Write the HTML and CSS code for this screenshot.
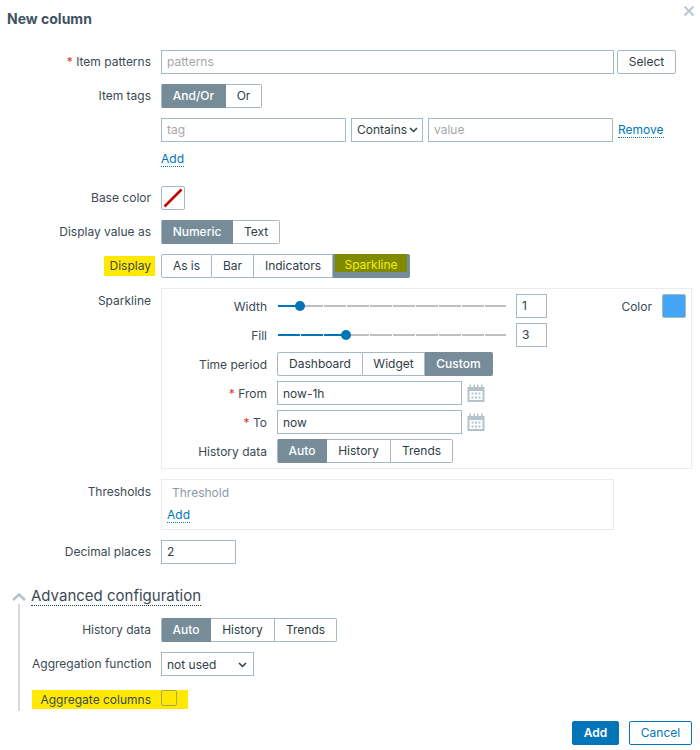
FILE: index.html
```html
<!DOCTYPE html>
<html lang="en">
<head>
  <meta charset="UTF-8" />
  <title>New column</title>
  <link rel="stylesheet" href="styles.css">
</head>
<body>
  <div class="dialog">
    <div class="dialog-head">
      <h1>New column</h1>
      <svg class="close" width="10" height="10" viewBox="0 0 10 10"><path d="M0.5 0.5L9.5 9.5M9.5 0.5L0.5 9.5" /></svg>
    </div>

    <div class="row">
      <div class="label"><span class="req">*</span> Item patterns</div>
      <div class="field">
        <input class="input w-patterns" type="text" placeholder="patterns" />
        <button class="btn-alt">Select</button>
      </div>
    </div>

    <div class="row">
      <div class="label">Item tags</div>
      <div class="seg">
        <span class="on s-andor">And/Or</span><span class="s-or">Or</span>
      </div>
    </div>

    <div class="row">
      <div class="label"></div>
      <div class="field">
        <input class="input w-tag" type="text" placeholder="tag" />
        <div class="select w-contains">Contains
          <svg width="9" height="6" viewBox="0 0 9 6"><path d="M1 1L4.5 4.5L8 1" /></svg>
        </div>
        <input class="input w-tag" type="text" placeholder="value" />
        <a class="link remove" href="#">Remove</a>
      </div>
    </div>

    <div class="row row-link">
      <div class="label"></div>
      <a class="link" href="#">Add</a>
    </div>

    <div class="row">
      <div class="label">Base color</div>
      <div class="swatch swatch-none">
        <svg width="22" height="22" viewBox="0 0 22 22"><path d="M2.500 19.500L19.500 2.500" /></svg>
      </div>
    </div>

    <div class="row">
      <div class="label">Display value as</div>
      <div class="seg">
        <span class="on s-numeric">Numeric</span><span class="s-text">Text</span>
      </div>
    </div>

    <div class="row">
      <div class="label"><mark class="hl-label">Display</mark></div>
      <div class="seg">
        <span class="s-is">As is</span><span class="s-bar">Bar</span><span class="s-ind">Indicators</span><span class="on s-spark"><mark class="hl-btn">Sparkline</mark></span>
      </div>
    </div>

    <div class="row">
      <div class="label label-box">Sparkline</div>
      <div class="box box-spark">
        <div class="spark-top">
          <div class="spark-sliders">
            <div class="subrow">
              <div class="sublabel">Width</div>
              <div class="slider"><div class="slider-fill" style="width: 22px"></div></div>
              <input class="input w-num" type="text" value="1" />
            </div>
            <div class="subrow">
              <div class="sublabel">Fill</div>
              <div class="slider"><div class="slider-fill" style="width: 68px"></div></div>
              <input class="input w-num" type="text" value="3" />
            </div>
          </div>
          <div class="spark-color">
            <span>Color</span>
            <div class="swatch swatch-blue"></div>
          </div>
        </div>
        <div class="subrow">
          <div class="sublabel">Time period</div>
          <div class="seg">
            <span class="s-dash">Dashboard</span><span class="s-widget">Widget</span><span class="on s-custom">Custom</span>
          </div>
        </div>
        <div class="subrow">
          <div class="sublabel"><span class="req">*</span> From</div>
          <input class="input w-date" type="text" value="now-1h" />
          <svg class="cal" width="18" height="18" viewBox="0 0 18 18"><use href="#cal-icon" /></svg>
        </div>
        <div class="subrow">
          <div class="sublabel"><span class="req">*</span> To</div>
          <input class="input w-date" type="text" value="now" />
          <svg class="cal" width="18" height="18" viewBox="0 0 18 18"><use href="#cal-icon" /></svg>
        </div>
        <div class="subrow">
          <div class="sublabel">History data</div>
          <div class="seg">
            <span class="on s-auto">Auto</span><span class="s-hist">History</span><span class="s-trends">Trends</span>
          </div>
        </div>
      </div>
    </div>

    <div class="row">
      <div class="label label-box">Thresholds</div>
      <div class="box box-thresh">
        <div class="thresh-head">Threshold</div>
        <a class="link" href="#">Add</a>
      </div>
    </div>

    <div class="row">
      <div class="label">Decimal places</div>
      <input class="input w-decimal" type="text" value="2" />
    </div>

    <div class="adv-head">
      <svg width="14" height="8" viewBox="0 0 14 8"><path d="M1 7L7 1.500L13 7" /></svg>
      <span>Advanced configuration</span>
    </div>

    <div class="adv">
      <div class="row">
        <div class="label">History data</div>
        <div class="seg">
          <span class="on s-auto">Auto</span><span class="s-hist">History</span><span class="s-trends">Trends</span>
        </div>
      </div>
      <div class="row">
        <div class="label">Aggregation function</div>
        <div class="select w-agg">not used
          <svg width="9" height="6" viewBox="0 0 9 6"><path d="M1 1L4.500 4.500L8 1" /></svg>
        </div>
      </div>
      <div class="row row-agg">
        <div class="label">Aggregate columns</div>
        <div class="check"></div>
      </div>
    </div>

    <div class="dialog-foot">
      <button class="btn-main">Add</button>
      <button class="btn-cancel">Cancel</button>
    </div>
  </div>

  <svg width="0" height="0" class="defs">
    <defs>
      <g id="cal-icon">
        <path class="cal-body" d="M0.500 3h2V0.500h1.500V3h2.500V0.500h1.500V3h2V0.500h1.500V3h2.500V0.500h1.500V3h2V18H0.500zM2.500 7v9h13V7z" />
        <path class="cal-dots" d="M4.500 8.500h2V10.500h-2zM8 8.500h2V10.500H8zM11.500 8.500h2V10.500h-2zM4.500 12.500h2V14.500h-2zM8 12.500h2V14.500H8zM11.500 12.500h2V14.500h-2z" />
      </g>
    </defs>
  </svg>
</body>
</html>
```

FILE: styles.css
```css
* {
  box-sizing: border-box;
}
body {
  margin: 0;
  background: #fff;
  color: #3b4a54;
  font-family: Inter, "Liberation Sans", sans-serif;
  font-size: 12px;
}
.dialog {
  width: 700px;
  height: 750px;
}
.dialog-head {
  display: flex;
  justify-content: space-between;
  height: 50px;
  padding: 6px 6px 0 7px;
}
.dialog-head h1 {
  margin: 5px 0 0;
  font-size: 14px;
  line-height: 16px;
  font-weight: 700;
  color: #3f5362;
}
.close {
  fill: none;
  stroke: #bcc8cf;
  stroke-width: 2;
}

/* rows */
.row {
  display: flex;
  align-items: flex-start;
  margin-bottom: 10px;
}
.label {
  width: 151px;
  margin-right: 10px;
  flex: none;
  text-align: right;
  white-space: nowrap;
  line-height: 24px;
  height: 24px;
}
.label-box {
  line-height: 25px;
}
.req {
  color: #e33734;
}
.field {
  display: flex;
  align-items: center;
}
.row-link {
  height: 24px;
}

/* inputs */
.input {
  height: 24px;
  padding: 0 5px 1px;
  border: 1px solid #a9b9c2;
  border-radius: 0;
  background: #fff;
  color: #2f3d46;
  font-family: inherit;
  font-size: 12px;
  outline: none;
}
.input::placeholder {
  color: #a6a6a6;
}
.w-patterns { width: 453px; }
.w-tag { width: 185px; }
.w-num { width: 31px; margin-left: 10px; }
.w-date { width: 185px; padding-bottom: 0; }
.w-decimal { width: 75px; }
.select {
  display: flex;
  align-items: center;
  justify-content: space-between;
  height: 24px;
  padding: 0 5px 1px;
  border: 1px solid #a9b9c2;
  color: #2f3d46;
}
.select svg {
  fill: none;
  stroke: #2f3d46;
  stroke-width: 1.5;
}
.w-contains { width: 72px; margin: 0 5px; padding-right: 4px; white-space: nowrap; }
.w-agg { width: 93px; padding: 1px 6px 0 5px; }
.btn-alt {
  width: 59px;
  height: 24px;
  margin-left: 3px;
  padding: 0 0 1px;
  border: 1px solid #a9b9c2;
  border-radius: 2px;
  background: #fff;
  color: #2f3d46;
  font-family: inherit;
  font-size: 12px;
}
.link {
  color: #0275b8;
  text-decoration: none;
  border-bottom: 1px dotted #0275b8;
  line-height: 14px;
}
.remove {
  margin-left: 5px;
}

/* segmented control */
.seg {
  display: flex;
  height: 24px;
  border-radius: 2px;
}
.seg span {
  display: block;
  height: 24px;
  line-height: 22px;
  text-align: center;
  color: #2f3d46;
  border: 1px solid #a9b9c2;
  border-left: 0;
}
.seg span:first-child {
  border-left: 1px solid #a9b9c2;
  border-radius: 2px 0 0 2px;
}
.seg span:last-child {
  border-radius: 0 2px 2px 0;
}
.seg .on {
  background: #768d99;
  border-color: #768d99;
  color: #fff;
  font-weight: 500;
}
.s-andor { width: 65px; }
.s-or { width: 36px; }
.s-numeric { width: 72px; }
.s-text { width: 47px; }
.s-is { width: 51px; }
.s-bar { width: 42px; }
.s-ind { width: 79px; }
.s-spark { width: 77px; }
.s-dash { width: 86px; }
.s-widget { width: 62px; }
.s-custom { width: 68px; }
.s-auto { width: 50px; }
.s-hist { width: 64px; }
.s-trends { width: 62px; }

/* highlighter marks */
.hl-label {
  display: inline-block;
  padding: 0 4px 0 6px;
  margin-right: -4px;
  line-height: 20px;
  background: #ffe900;
  color: #3b4a54;
}
.hl-btn {
  display: block;
  height: 18px;
  margin: -1px 2px 0 2px;
  line-height: 22px;
  background: #808a00;
  color: #f4f000;
  font-weight: 400;
}

/* swatches */
.swatch {
  width: 24px;
  height: 24px;
  border: 1px solid #a9b9c2;
  border-radius: 2px;
}
.swatch-none svg {
  display: block;
  fill: none;
  stroke: #c00000;
  stroke-width: 2.5;
}
.swatch-blue {
  background: #42a5f5;
}

/* framed groups */
.box {
  border: 1px solid #ebebeb;
}
.box-spark {
  width: 531px;
  height: 181px;
  padding: 5px 5px 5px 0;
}
.box-thresh {
  width: 453px;
  height: 51px;
  padding: 5px;
}
.thresh-head {
  padding-left: 5px;
  line-height: 16px;
  margin-bottom: 6px;
  color: #8a9aa5;
}
.spark-top {
  display: flex;
  justify-content: space-between;
  align-items: flex-start;
  margin-bottom: 5px;
}
.spark-color {
  display: flex;
  align-items: center;
  gap: 10px;
}
.subrow {
  display: flex;
  align-items: center;
  height: 24px;
  margin-bottom: 5px;
}
.subrow:last-child {
  margin-bottom: 0;
}
.sublabel {
  width: 105px;
  margin-right: 10px;
  text-align: right;
}
.cal {
  margin-left: 5px;
}
.cal-body {
  fill: #b4c3cb;
}
.cal-dots {
  fill: #b4c3cb;
}
.defs {
  position: absolute;
}

/* slider */
.slider {
  position: relative;
  width: 228px;
  height: 2px;
  margin-left: 1px;
  background: repeating-linear-gradient(90deg, #bfbfbf 0, #bfbfbf 22px, #fff 22px, #fff 23px);
}
.slider-fill {
  position: relative;
  height: 2px;
  background: repeating-linear-gradient(90deg, #0275b8 0, #0275b8 22px, #fff 22px, #fff 23px);
}
.slider-fill::after {
  content: "";
  position: absolute;
  right: -5px;
  top: -4px;
  width: 10px;
  height: 10px;
  border-radius: 50%;
  background: #0275b8;
}

/* advanced section */
.adv-head {
  display: flex;
  align-items: center;
  gap: 5px;
  height: 21px;
  margin: 22px 0 0 12px;
  font-size: 15px;
}
.adv-head span {
  border-bottom: 1px dotted #2f3d46;
  line-height: 18px;
}
.adv-head svg {
  fill: none;
  stroke: #b4c3cb;
  stroke-width: 2.5;
}
.adv {
  height: 107px;
  margin: -3px 0 0 18px;
  padding: 14px 0 0 12px;
  border-left: 2px solid #d5dde2;
}
.adv .label {
  width: 119px;
}
.adv .row:last-child {
  margin-bottom: 0;
}
.row-agg {
  width: 156px;
  height: 19px;
  margin-top: 14px;
  background: #ffe900;
}
.row-agg .label {
  height: 19px;
  line-height: 19px;
}
.check {
  width: 16px;
  height: 16px;
  border: 1px solid #a9a944;
  border-radius: 2px;
}

/* footer */
.dialog-foot {
  display: flex;
  justify-content: flex-end;
  gap: 10px;
  margin-top: 10px;
  padding-right: 8px;
}
.dialog-foot button {
  height: 24px;
  padding: 0 0 1px;
  border-radius: 2px;
  font-family: inherit;
  font-size: 12px;
}
.btn-main {
  width: 47px;
  border: 1px solid #0275b8;
  background: #0275b8;
  color: #fff;
  font-weight: 600;
}
.btn-cancel {
  width: 63px;
  border: 1px solid #0275b8;
  background: #fff;
  color: #0275b8;
}
```
